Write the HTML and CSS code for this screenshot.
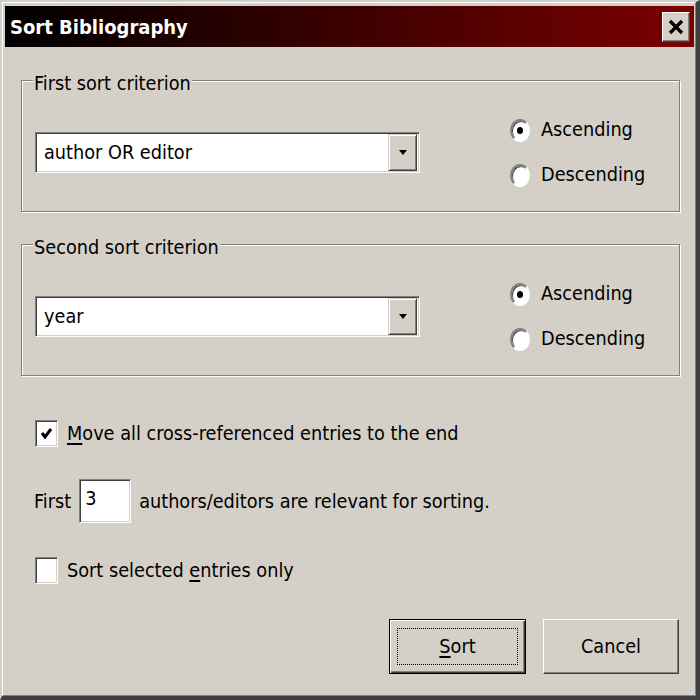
FILE: index.html
```html
<!DOCTYPE html>
<html>
<head>
<meta charset="utf-8">
<link rel="stylesheet" href="styles.css">
</head>
<body>
<div class="window">
  <div class="frame">
    <div class="titlebar">
      <span class="title">Sort Bibliography</span>
      <span class="close"><svg width="16" height="16" viewBox="0 0 16 16"><path d="M2 2 L14 14 M14 2 L2 14" stroke="#000" stroke-width="3.4" fill="none"/></svg></span>
    </div>
    <div class="content">
      <fieldset class="group">
        <legend>First sort criterion</legend>
        <div class="group-row">
          <div class="combo">
            <span class="combo-text">author OR editor</span>
            <span class="drop"><svg width="10" height="6" viewBox="0 0 10 6"><path d="M1 0 H9 L5 5 Z" fill="#000"/></svg></span>
          </div>
          <div class="radios">
            <label class="radio"><span class="dot checked"></span>Ascending</label>
            <label class="radio"><span class="dot"></span>Descending</label>
          </div>
        </div>
      </fieldset>
      <fieldset class="group second">
        <legend>Second sort criterion</legend>
        <div class="group-row">
          <div class="combo">
            <span class="combo-text">year</span>
            <span class="drop"><svg width="10" height="6" viewBox="0 0 10 6"><path d="M1 0 H9 L5 5 Z" fill="#000"/></svg></span>
          </div>
          <div class="radios">
            <label class="radio"><span class="dot checked"></span>Ascending</label>
            <label class="radio"><span class="dot"></span>Descending</label>
          </div>
        </div>
      </fieldset>
      <div class="check-row first-check">
        <span class="box"><svg width="13" height="13" viewBox="0 0 13 13"><path d="M2 6 L5 10 L11 2" stroke="#000" stroke-width="3" fill="none"/></svg></span>
        <span class="label"><u>M</u>ove all cross-referenced entries to the end</span>
      </div>
      <div class="count-row">
        <span>First</span>
        <span class="spin">3</span>
        <span>authors/editors are relevant for sorting.</span>
      </div>
      <div class="check-row third-check">
        <span class="box"></span>
        <span class="label">Sort selected <u>e</u>ntries only</span>
      </div>
      <div class="buttons">
        <button class="btn default"><span class="focus"><u>S</u>ort</span></button>
        <button class="btn">Cancel</button>
      </div>
    </div>
  </div>
</div>
</body>
</html>
```

FILE: styles.css
```css
html, body {
  margin: 0;
  padding: 0;
  background: #d4d0c8;
}

body {
  font-family: "DejaVu Sans Condensed", "DejaVu Sans", sans-serif;
  font-stretch: condensed;
  font-size: 19.7px;
  color: #000;
}

.window {
  width: 700px;
  height: 700px;
  box-sizing: border-box;
  border-style: solid;
  border-width: 2px 4px 4px 2px;
  border-color: #d4d0c8 #404040 #404040 #d4d0c8;
}

.frame {
  height: 100%;
  box-sizing: border-box;
  border: 1px solid;
  border-color: #ffffff #808080 #808080 #ffffff;
  padding: 3px 1px 1px 2px;
  display: flex;
  flex-direction: column;
}

.titlebar {
  height: 41px;
  flex: none;
  background: linear-gradient(to right, #000000 0%, #300000 40%, #7c0000 100%);
  display: flex;
  align-items: center;
  justify-content: space-between;
  padding: 0 4px 0 5px;
}

.title {
  color: #fff;
  font-weight: bold;
  font-size: 20px;
}

.close {
  width: 28px;
  height: 30px;
  box-sizing: border-box;
  background: #d4d0c8;
  border: 1px solid;
  border-color: #ffffff #404040 #404040 #ffffff;
  box-shadow: inset -1px -1px 0 #808080;
  display: flex;
  align-items: center;
  justify-content: center;
}

.content {
  flex: 1;
  padding: 0 14px 0 16px;
  display: flex;
  flex-direction: column;
}

.group {
  margin: 22px 0 0 0;
  padding: 26px 0 23px 13px;
  border: 1px solid #808080;
  box-shadow: inset 1px 1px 0 #ffffff, 1px 1px 0 #ffffff;
  min-width: 0;
}

.group.second {
  margin-top: 21px;
}

.group legend {
  padding: 4px 1px 0 1px;
  margin-left: -2px;
  line-height: 22px;
  height: 22px;
  box-sizing: border-box;
  background: #d4d0c8;
}

.group-row {
  display: flex;
  align-items: center;
}

.combo {
  width: 385px;
  height: 41px;
  box-sizing: border-box;
  background: #fff;
  border: 1px solid;
  border-color: #808080 #ffffff #ffffff #808080;
  box-shadow: inset 1px 1px 0 #404040, inset -1px -1px 0 #d4d0c8;
  display: flex;
  align-items: center;
  justify-content: space-between;
  padding: 1px 2px 1px 8px;
}

.combo-text {
  line-height: 26px;
}

.drop {
  width: 29px;
  height: 37px;
  box-sizing: border-box;
  background: #d4d0c8;
  border: 1px solid;
  border-color: #d4d0c8 #404040 #404040 #d4d0c8;
  box-shadow: inset 1px 1px 0 #ffffff, inset -1px -1px 0 #808080;
  display: flex;
  align-items: center;
  justify-content: center;
}

.radios {
  margin-left: 90px;
  display: flex;
  flex-direction: column;
  gap: 19px;
}

.radio {
  display: flex;
  align-items: center;
  height: 26px;
  line-height: 26px;
}

.dot {
  width: 20px;
  height: 23px;
  box-sizing: border-box;
  border-radius: 50%;
  background: #fff;
  border: 2px solid;
  border-color: #808080 #ffffff #ffffff #808080;
  box-shadow: inset 1px 1px 0 #404040;
  margin-right: 11px;
  display: flex;
  align-items: center;
  justify-content: center;
}

.dot.checked::after {
  content: "";
  width: 6px;
  height: 7px;
  border-radius: 50%;
  background: #000;
}

.check-row {
  display: flex;
  align-items: center;
  height: 28px;
  padding-left: 14px;
}

.first-check {
  margin-top: 43px;
}

.third-check {
  margin-top: 33px;
}

.box {
  width: 23px;
  height: 27px;
  box-sizing: border-box;
  background: #fff;
  border: 1px solid;
  border-color: #808080 #ffffff #ffffff #808080;
  box-shadow: inset 1px 1px 0 #404040, inset -1px -1px 0 #d4d0c8;
  margin-right: 9px;
  display: flex;
  align-items: center;
  justify-content: center;
}

.label u,
.btn u {
  text-decoration-thickness: 2px;
  text-underline-offset: 3px;
}

.count-row {
  display: flex;
  align-items: center;
  margin-top: 32px;
  padding-left: 13px;
  gap: 8px;
}

.spin {
  width: 52px;
  height: 44px;
  box-sizing: border-box;
  background: #fff;
  border: 1px solid;
  border-color: #808080 #ffffff #ffffff #808080;
  box-shadow: inset 1px 1px 0 #404040, inset -1px -1px 0 #d4d0c8;
  padding: 7px 0 0 5px;
  line-height: 24px;
}

.buttons {
  display: flex;
  justify-content: flex-end;
  gap: 17px;
  margin-top: 35px;
  padding-right: 1px;
}

.btn {
  font: inherit;
  color: #000;
  width: 136px;
  height: 55px;
  box-sizing: border-box;
  background: #d4d0c8;
  border: 1px solid;
  border-color: #ffffff #404040 #404040 #ffffff;
  box-shadow: inset -1px -1px 0 #808080, inset 1px 1px 0 #d4d0c8;
  padding: 0;
  display: flex;
  align-items: center;
  justify-content: center;
}

.btn.default {
  width: 137px;
  border: 1px solid #000;
  box-shadow: inset 1px 1px 0 #ffffff, inset -1px -1px 0 #404040, inset -2px -2px 0 #808080;
  padding: 8px 7px;
}

.focus {
  flex: 1;
  align-self: stretch;
  border: 1px dotted #000;
  display: flex;
  align-items: center;
  justify-content: center;
}
```
